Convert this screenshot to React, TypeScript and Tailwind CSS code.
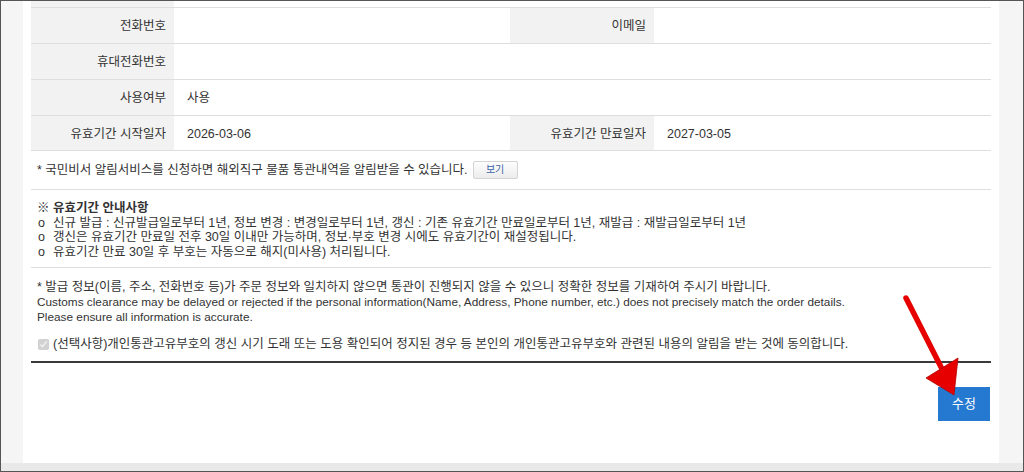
const font = "[font-family:'Liberation_Sans','Noto_Sans_CJK_KR',sans-serif]";

interface Row {
    label: string;
    value?: string;
    label2?: string;
    value2?: string;
    h: string;
}

const rows: Row[] = [
    { label: "전화번호", value: "", label2: "이메일", value2: "", h: "h-[36px]" },
    { label: "휴대전화번호", value: "", h: "h-[36px]" },
    { label: "사용여부", value: "사용", h: "h-[36px]" },
    { label: "유효기간 시작일자", value: "2026-03-06", label2: "유효기간 만료일자", value2: "2027-03-05", h: "h-[35px]" },
];

const guideLines = [
    "신규 발급 : 신규발급일로부터 1년, 정보 변경 : 변경일로부터 1년, 갱신 : 기존 유효기간 만료일로부터 1년, 재발급 : 재발급일로부터 1년",
    "갱신은 유효기간 만료일 전후 30일 이내만 가능하며, 정보·부호 변경 시에도 유효기간이 재설정됩니다.",
    "유효기간 만료 30일 후 부호는 자동으로 해지(미사용) 처리됩니다.",
];

const InfoRow = ({ label, value, label2, value2, h }: Row) => (
    <div className={`flex ${h} border-b border-[#dedede] text-[12.5px]`}>
        <div className="w-[143px] shrink-0 bg-[#f2f2f2] flex items-center justify-end pr-2 pt-[2px]">{label}</div>
        <div className={`${label2 ? "w-[336px]" : "flex-1"} flex items-center pl-[13px] pt-[2px]`}>{value}</div>
        {label2 && (
            <>
                <div className="w-[144px] shrink-0 bg-[#f2f2f2] flex items-center justify-end pr-2 pt-[2px]">{label2}</div>
                <div className="flex-1 flex items-center pl-[13px] pt-[2px]">{value2}</div>
            </>
        )}
    </div>
);

const App = () => {
    return (
        <div className={`relative w-[1024px] h-[472px] overflow-hidden border border-[#555] bg-[#f5f5f5] flex flex-col text-[12.5px] text-[#333] ${font}`}>
            <div className="flex-1 flex min-h-0 pl-[22px] pr-[24px]">
                <div className="flex-1 bg-white px-2 flex flex-col">
                    {/* cut off row at the top */}
                    <div className="flex h-[7px] border-b border-[#dedede]">
                        <div className="w-[143px] shrink-0 bg-[#f2f2f2]"></div>
                        <div className="flex-1"></div>
                    </div>

                    {rows.map((row, index) => (
                        <InfoRow key={index} {...row} />
                    ))}

                    {/* 국민비서 */}
                    <div className="h-[39px] border-b border-[#dedede] flex items-center pl-[6px]">
                        <span>* 국민비서 알림서비스를 신청하면 해외직구 물품 통관내역을 알림받을 수 있습니다.</span>
                        <button className="ml-[5px] h-[18px] w-[45px] rounded-[2px] border border-[#d4d4d4] bg-gradient-to-b from-[#fdfdfd] to-[#ececec] text-[10px] text-[#3b64a8] leading-none">
                            보기
                        </button>
                    </div>

                    {/* 유효기간 안내 */}
                    <div className="h-[78px] border-b border-[#dedede] pl-[6px] pt-[11px] leading-[14.5px]">
                        <div className="font-bold">※ 유효기간 안내사항</div>
                        {guideLines.map((line, index) => (
                            <div key={index} className="flex">
                                <span className="w-[16px] shrink-0 pl-[1px]">o</span>
                                <span>{line}</span>
                            </div>
                        ))}
                    </div>

                    {/* 발급 정보 안내 */}
                    <div className="h-[95px] border-b-2 border-[#3a3a3a] pl-[6px] pt-[12px] leading-[15px]">
                        <div>* 발급 정보(이름, 주소, 전화번호 등)가 주문 정보와 일치하지 않으면 통관이 진행되지 않을 수 있으니 정확한 정보를 기재하여 주시기 바랍니다.</div>
                        <div className="text-[11.8px]">Customs clearance may be delayed or rejected if the personal information(Name, Address, Phone number, etc.) does not precisely match the order details.</div>
                        <div className="text-[11.8px]">Please ensure all information is accurate.</div>
                        <label className="mt-[12px] flex items-center gap-[4px]">
                            <input type="checkbox" checked disabled readOnly className="w-[11px] h-[11px] m-0 ml-[1px] accent-[#b5b5b5]" />
                            <span>(선택사항)개인통관고유부호의 갱신 시기 도래 또는 도용 확인되어 정지된 경우 등 본인의 개인통관고유부호와 관련된 내용의 알림을 받는 것에 동의합니다.</span>
                        </label>
                    </div>

                    <div className="flex justify-end pt-[24px] pr-[1px]">
                        <button className="w-[52px] h-[34px] bg-[#2679d0] text-white text-[13px]">수정</button>
                    </div>
                </div>
            </div>
            <div className="h-[8px] bg-[#e9e9e9]"></div>

            {/* red arrow */}
            <svg className="absolute left-0 top-0 pointer-events-none" width="1024" height="472" viewBox="0 0 1024 472">
                <line x1="905" y1="297" x2="940" y2="366" stroke="#e60000" strokeWidth="5.5" strokeLinecap="round" />
                <polygon points="925,377 957,357 953,394" fill="#e60000" stroke="#b30000" strokeWidth="0.8" strokeLinejoin="round" />
            </svg>
        </div>
    );
};

export default App;
